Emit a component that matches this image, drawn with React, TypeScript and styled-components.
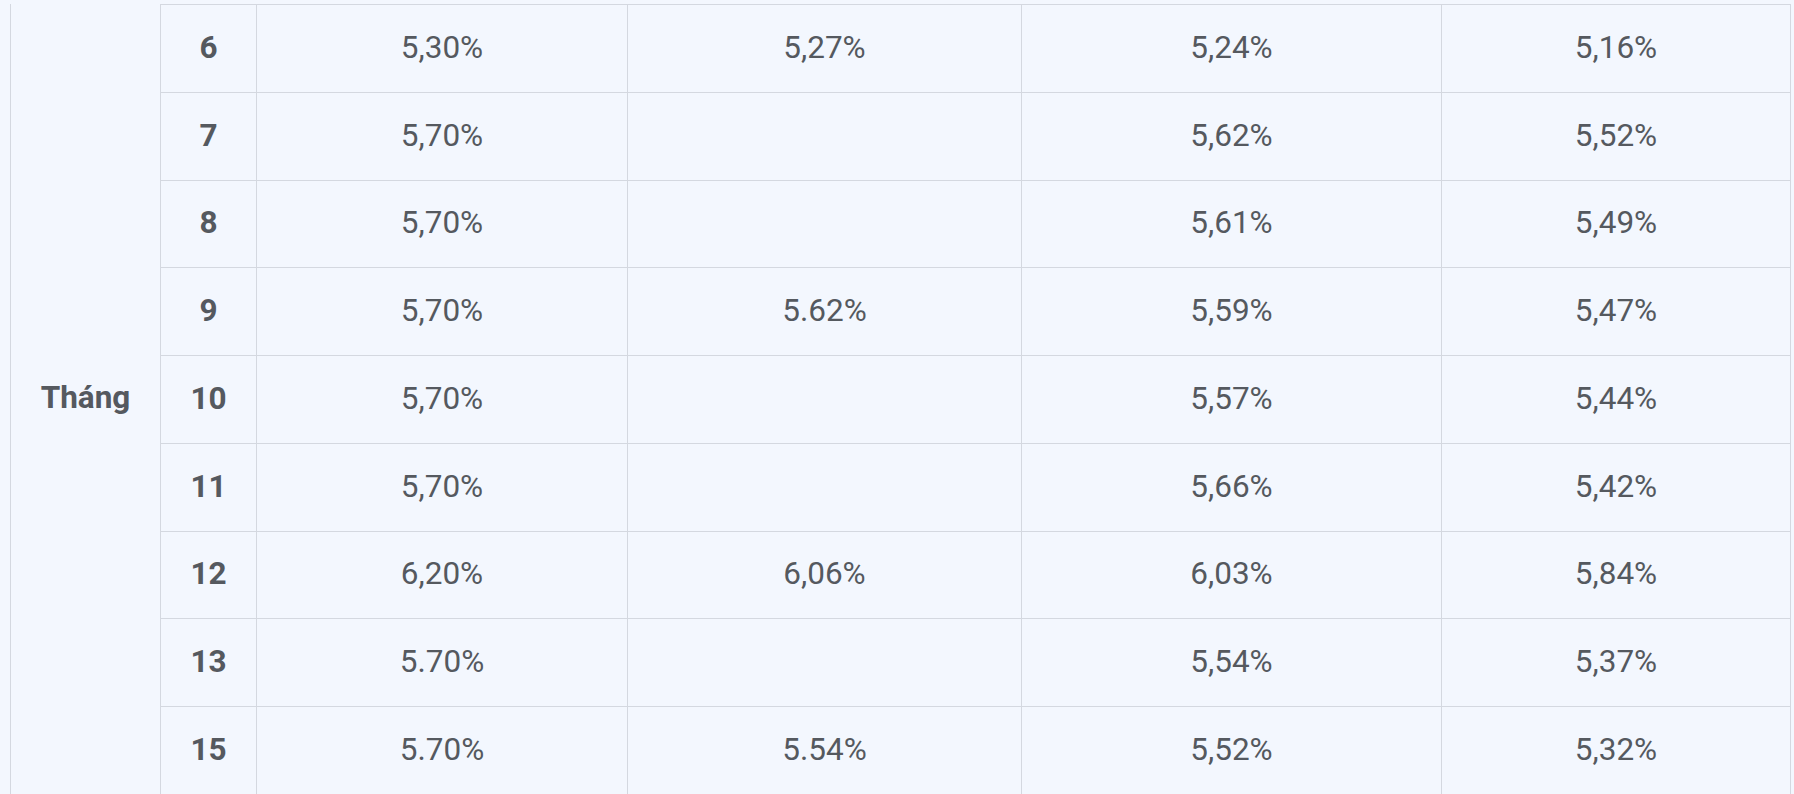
import React from "react";
import styled, { createGlobalStyle } from "styled-components";

const GlobalStyle = createGlobalStyle`
  html, body {
    margin: 0;
    padding: 0;
    background: #f3f7fe;
    overflow: hidden;
  }
  * { box-sizing: border-box; }
`;

const Page = styled.div`
  padding: 4px 0 0 10px;
  background: #f3f7fe;
  font-family: Roboto, "Liberation Sans", Arial, sans-serif;
  color: #55595f;
`;

const Grid = styled.div`
  display: grid;
  grid-template-columns: 150px 96px 371px 394px 420px 349px;
  grid-auto-rows: 87.75px;
  border-left: 1px solid #d4d8e0;
  width: max-content;
`;

const GroupCell = styled.div`
  grid-column: 1;
  grid-row: 1 / span 9;
  display: flex;
  align-items: center;
  justify-content: center;
  padding-bottom: 2px;
  border-right: 1px solid #d4d8e0;
  font-size: 31.5px;
  font-weight: 700;
`;

const Cell = styled.div<{ $bold?: boolean }>`
  display: flex;
  align-items: center;
  justify-content: center;
  padding-bottom: 2px;
  border-top: 1px solid #d4d8e0;
  border-right: 1px solid #d4d8e0;
  font-size: 31.5px;
  font-weight: ${(p) => (p.$bold ? 700 : 400)};
`;

const rows: [string, string, string, string, string][] = [
  ["6", "5,30%", "5,27%", "5,24%", "5,16%"],
  ["7", "5,70%", "", "5,62%", "5,52%"],
  ["8", "5,70%", "", "5,61%", "5,49%"],
  ["9", "5,70%", "5.62%", "5,59%", "5,47%"],
  ["10", "5,70%", "", "5,57%", "5,44%"],
  ["11", "5,70%", "", "5,66%", "5,42%"],
  ["12", "6,20%", "6,06%", "6,03%", "5,84%"],
  ["13", "5.70%", "", "5,54%", "5,37%"],
  ["15", "5.70%", "5.54%", "5,52%", "5,32%"],
];

export default function App() {
  return (
    <>
      <GlobalStyle />
      <Page>
        <Grid>
          <GroupCell>Tháng</GroupCell>
          {rows.map((r) => (
            <React.Fragment key={r[0]}>
              <Cell $bold>{r[0]}</Cell>
              <Cell>{r[1]}</Cell>
              <Cell>{r[2]}</Cell>
              <Cell>{r[3]}</Cell>
              <Cell>{r[4]}</Cell>
            </React.Fragment>
          ))}
        </Grid>
      </Page>
    </>
  );
}
